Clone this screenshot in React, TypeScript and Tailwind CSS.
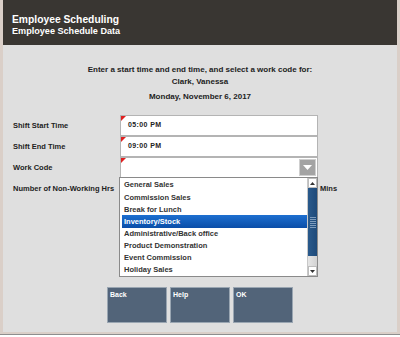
import React from "react";

const workCodes = [
  "General Sales",
  "Commission Sales",
  "Break for Lunch",
  "Inventory/Stock",
  "Administrative/Back office",
  "Product Demonstration",
  "Event Commission",
  "Holiday Sales",
];

function RequiredMark() {
  return (
    <span className="absolute left-0 top-0 h-0 w-0 border-r-[5px] border-t-[5px] border-r-transparent border-t-[#e02020]" />
  );
}

function Field({ label, value, dropdown }: { label: string; value?: string; dropdown?: boolean }) {
  return (
    <div className="flex h-[21px] items-center">
      <div className="w-[107px] text-[7.5px] font-bold text-[#222]">{label}</div>
      <div className="relative flex h-[21px] w-[198px] items-center border border-[#b4b4b4] bg-white pl-[7px] text-[7px] font-bold tracking-[0.4px] text-[#222]">
        <RequiredMark />
        {value}
        {dropdown && (
          <div className="absolute right-[1px] top-[1px] flex h-[17px] w-[17px] items-center justify-center border border-[#cfcfcf] bg-[#a3a3a3]">
            <svg width="9" height="6" viewBox="0 0 9 6">
              <path d="M0 0 L9 0 L4.5 5 Z" fill="#fff" />
            </svg>
          </div>
        )}
      </div>
    </div>
  );
}

export default function App() {
  return (
    <div
      className="flex h-[337px] w-[400px] flex-col bg-white"
      style={{ fontFamily: '"Liberation Sans", Arial, sans-serif' }}
    >
      <div className="flex h-[334px] flex-col border-x-[3px] border-b-[2px] border-[#dacfc8] bg-[#dfdfdf]">
        <header className="h-[45px] bg-[#393632] pl-[9px] pt-[14px] text-white">
          <div className="text-[10.3px] font-bold leading-[12px]">Employee Scheduling</div>
          <div className="text-[9.1px] font-bold leading-[11px]">Employee Schedule Data</div>
        </header>

        <div className="mt-[19px] flex flex-col items-center text-[8px] font-bold leading-[12px] text-[#222]">
          <div>Enter a start time and end time, and select a work code for:</div>
          <div>Clark, Vanessa</div>
          <div className="mt-[3px]">Monday, November 6, 2017</div>
        </div>

        <div className="relative mt-[12px] flex flex-col pl-[10px]">
          <Field label="Shift Start Time" value="05:00 PM" />
          <Field label="Shift End Time" value="09:00 PM" />
          <Field label="Work Code" dropdown />
          <div className="flex h-[21px] items-center">
            <div className="w-[107px] text-[7.5px] font-bold text-[#222]">Number of Non-Working Hrs</div>
            <div className="w-[198px]" />
            <div className="ml-[2px] text-[7.5px] font-bold text-[#222]">Mins</div>
          </div>

          {/* open work code list */}
          <div className="absolute left-[116px] top-[62px] flex h-[100px] w-[199px] border border-[#8a8a8a] bg-white">
            <div className="flex flex-1 flex-col pl-[2px] pt-[1px]">
              {workCodes.map((c, i) => (
                <div
                  key={c}
                  className={
                    "flex h-[12.2px] items-center pl-[2px] text-[7.5px] font-bold " +
                    (i === 3
                      ? "bg-gradient-to-b from-[#1d6fd0] to-[#0a4ea8] text-white"
                      : "text-[#333]")
                  }
                >
                  {c}
                </div>
              ))}
            </div>
            <div className="flex w-[10px] flex-col border-l border-[#c8c8c8] bg-[#f0f0f0]">
              <div className="flex h-[10px] items-center justify-center border border-[#bdbdbd] bg-white">
                <svg width="5" height="3" viewBox="0 0 5 3">
                  <path d="M0 3 L5 3 L2.5 0 Z" fill="#333" />
                </svg>
              </div>
              <div className="flex h-[68px] flex-col items-center justify-center gap-[1px] bg-gradient-to-r from-[#2a5a8c] to-[#1e4a7a]">
                {[0, 1, 2, 3, 4, 5].map((k) => (
                  <div key={k} className="h-[1px] w-[6px] bg-[#7d9cbd]" />
                ))}
              </div>
              <div className="flex-1 bg-gradient-to-r from-[#e6e6e6] to-[#d2d2d2]" />
              <div className="flex h-[10px] items-center justify-center border border-[#bdbdbd] bg-white">
                <svg width="5" height="3" viewBox="0 0 5 3">
                  <path d="M0 0 L5 0 L2.5 3 Z" fill="#333" />
                </svg>
              </div>
            </div>
          </div>
        </div>

        <div className="mt-[88px] flex justify-center gap-[3px]">
          {["Back", "Help", "OK"].map((b) => (
            <div
              key={b}
              className="h-[36px] w-[60px] border border-[#9aa6b2] bg-[#526479] px-[2px] pt-[2px] text-[7px] font-bold text-white"
            >
              {b}
            </div>
          ))}
        </div>
      </div>
      <div className="h-[1px] bg-[#8e8e8e]" />
    </div>
  );
}
